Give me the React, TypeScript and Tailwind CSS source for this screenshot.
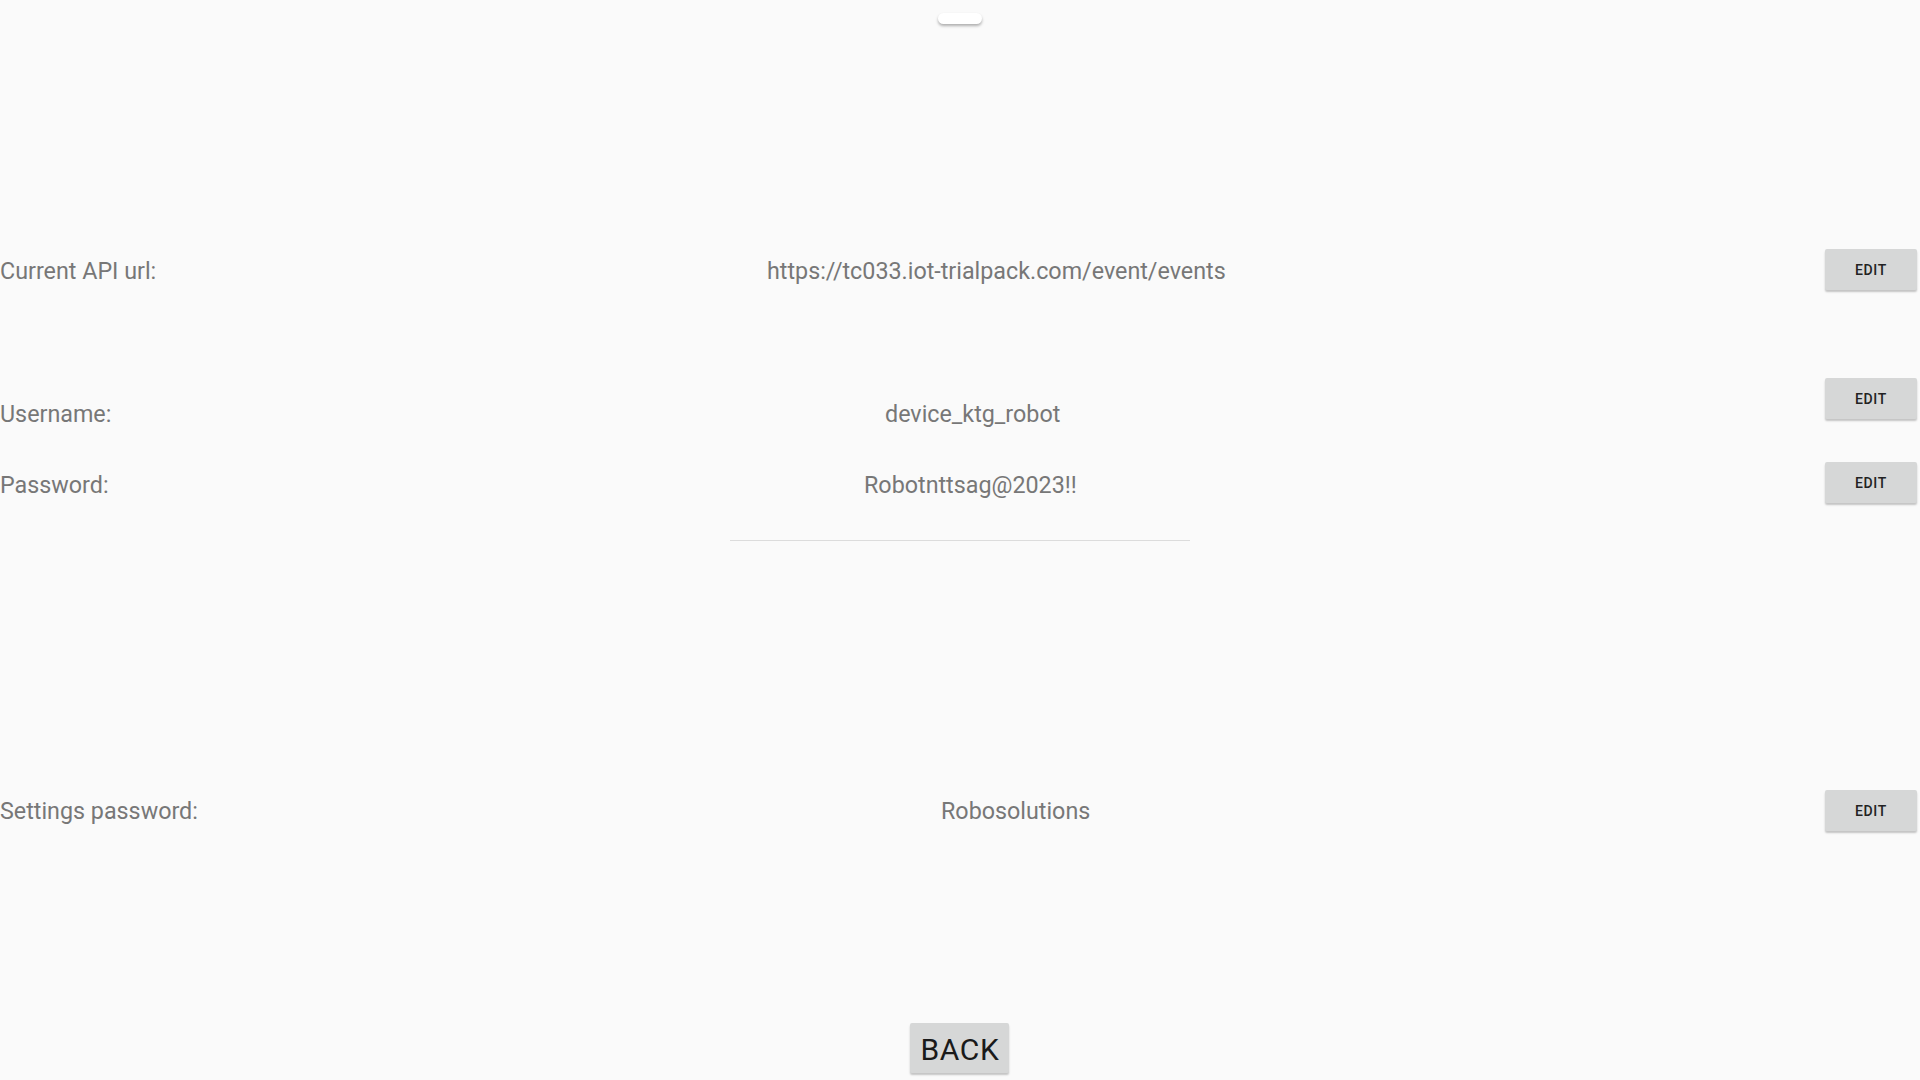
import React from "react";

function EditButton() {
  return (
    <button className="w-[92px] h-[41px] bg-[#d6d7d7] rounded-[2px] shadow-[0_2px_2px_rgba(0,0,0,0.22)] text-[14px] font-medium tracking-[0.05em] text-[#222222] leading-none flex items-center justify-center">
      EDIT
    </button>
  );
}

function Row({
  label,
  value,
  valueX,
  textTop,
  className,
}: {
  label: string;
  value: string;
  valueX: string;
  textTop: string;
  className: string;
}) {
  return (
    <div className={`flex items-start w-full ${className}`}>
      <div className={`${valueX} ${textTop} shrink-0 text-[23.3px] leading-6 text-[#777777]`}>{label}</div>
      <div className={`${textTop} text-[23.3px] leading-6 text-[#777777] whitespace-nowrap`}>{value}</div>
      <div className="flex-1" />
      <div className="mr-[3px]">
        <EditButton />
      </div>
    </div>
  );
}

export default function App() {
  return (
    <div
      className="w-[1920px] h-[1080px] bg-[#fafafa] flex flex-col overflow-hidden"
      style={{ fontFamily: "Roboto, 'Liberation Sans', sans-serif" }}
    >
      <div className="mx-auto mt-[13px] w-[44px] h-[11px] bg-white rounded-full shadow-[0_2px_3px_rgba(0,0,0,0.3)]" />

      <Row
        className="mt-[225px] h-[41px]"
        label="Current API url:"
        value="https://tc033.iot-trialpack.com/event/events"
        valueX="w-[767px]"
        textTop="mt-[10px]"
      />
      <Row
        className="mt-[88px] h-[42px]"
        label="Username:"
        value="device_ktg_robot"
        valueX="w-[885px]"
        textTop="mt-[24px]"
      />
      <Row
        className="mt-[42px] h-[41px]"
        label="Password:"
        value="Robotnttsag@2023!!"
        valueX="w-[864px]"
        textTop="mt-[11px]"
      />

      <div className="mt-[37px] ml-[730px] w-[460px] h-px bg-[#dcdcdc]" />

      <Row
        className="mt-[249px] h-[43px]"
        label="Settings password:"
        value="Robosolutions"
        valueX="w-[941px]"
        textTop="mt-[9px]"
      />

      <div className="mt-[190px] flex justify-center">
        <button className="ml-[-1px] w-[99px] h-[50px] bg-[#d6d7d7] rounded-[2px] shadow-[0_2px_2px_rgba(0,0,0,0.22)] text-[30px] font-normal tracking-[0.02em] text-[#1a1a1a] leading-none flex items-center justify-center pl-[1px] pt-[4px]">
          BACK
        </button>
      </div>
    </div>
  );
}
